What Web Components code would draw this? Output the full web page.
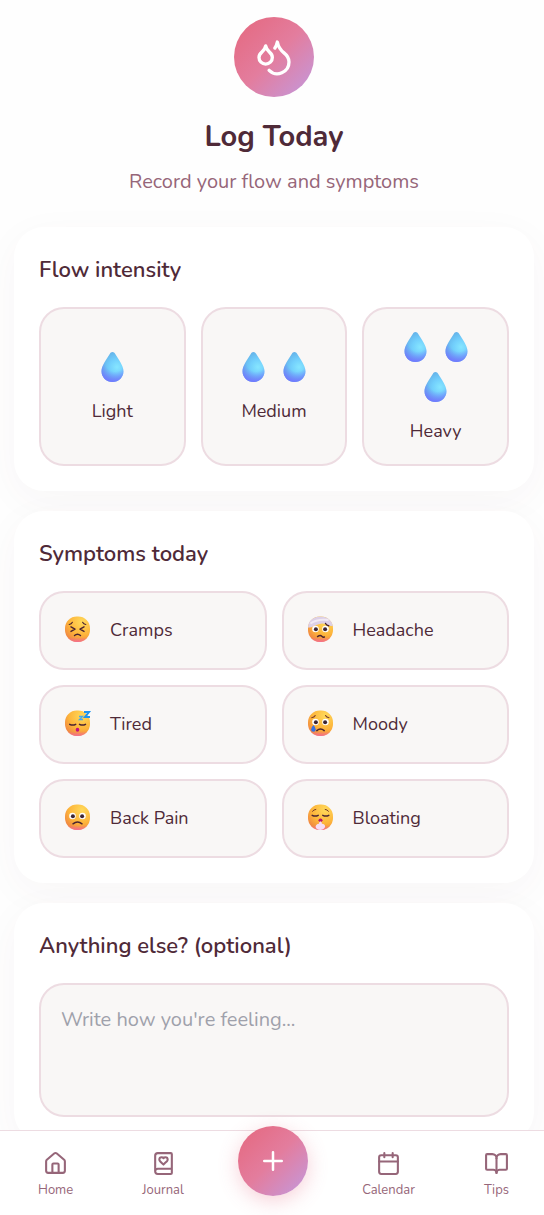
<!DOCTYPE html>
<html lang="en">
<head>
<meta charset="utf-8">
<meta name="viewport" content="width=device-width, initial-scale=1">
<title>Log Today</title>
<style>
    :root {
        --ink: #4f2a38;
        --muted: #966679;
        --line: #eddce2;
        --tile: #f9f7f6;
        --brand: linear-gradient(135deg, #e5677d 0%, #e37d9e 50%, #c29ae0 100%);
    }
    body {
        margin: 0; height: 100vh; display: flex; flex-direction: column;
        background: #fefefe; color: var(--ink);
        font-family: Nunito, Lato, "Noto Sans", sans-serif; font-size: 18px;
    }
    main {
        flex: 1; min-height: 0; overflow: hidden auto; scrollbar-width: none;
        display: flex; flex-direction: column; gap: 20px; padding: 17px 10px 20px 14px;
    }
    .flow { display: grid; grid-template-columns: repeat(3, 1fr); gap: 15px; }
    .symptoms { display: grid; grid-template-columns: repeat(2, 1fr); gap: 15px; }
</style>
</head>
<body>
<main>
    <log-header>
        <span slot="title">Log Today</span>
        <span slot="subtitle">Record your flow and symptoms</span>
    </log-header>
    <log-card>
        <span slot="title">Flow intensity</span>
        <div class="flow">
            <flow-option drops="1">Light</flow-option>
            <flow-option drops="2">Medium</flow-option>
            <flow-option drops="3">Heavy</flow-option>
        </div>
    </log-card>
    <log-card>
        <span slot="title">Symptoms today</span>
        <div class="symptoms">
            <symptom-option face="cramps">Cramps</symptom-option>
            <symptom-option face="headache">Headache</symptom-option>
            <symptom-option face="tired">Tired</symptom-option>
            <symptom-option face="moody">Moody</symptom-option>
            <symptom-option face="back">Back Pain</symptom-option>
            <symptom-option face="bloating">Bloating</symptom-option>
        </div>
    </log-card>
    <notes-card label="Anything else? (optional)" placeholder="Write how you're feeling..."></notes-card>
</main>
<bottom-nav>
    <nav-item icon="home" href="#home">Home</nav-item>
    <nav-item icon="journal" href="#journal">Journal</nav-item>
    <add-button></add-button>
    <nav-item icon="calendar" href="#calendar">Calendar</nav-item>
    <nav-item icon="tips" href="#tips">Tips</nav-item>
</bottom-nav>

<script>
const ICONS = {
    drops: '<path d="M7 16.3c2.2 0 4-1.83 4-4.05 0-1.16-.57-2.26-1.71-3.19S7.29 6.75 7 5.3c-.29 1.45-1.14 2.84-2.29 3.76S3 11.1 3 12.25c0 2.22 1.8 4.05 4 4.05z"/><path d="M12.56 6.6A10.97 10.97 0 0 0 14 3.02c.5 2.5 2 4.9 4 6.5s3 3.5 3 5.5a6.98 6.98 0 0 1-11.91 4.97"/>',
    home: '<path d="M15 21v-8a1 1 0 0 0-1-1h-4a1 1 0 0 0-1 1v8"/><path d="M3 10a2 2 0 0 1 .709-1.528l7-5.999a2 2 0 0 1 2.582 0l7 5.999A2 2 0 0 1 21 10v9a2 2 0 0 1-2 2H5a2 2 0 0 1-2-2z"/>',
    journal: '<path d="M16 8.2A2.22 2.22 0 0 0 13.8 6c-.8 0-1.4.3-1.8.9-.4-.6-1-.9-1.8-.9A2.22 2.22 0 0 0 8 8.2c0 .6.3 1.2.7 1.6A226.652 226.652 0 0 0 12 13a404 404 0 0 0 3.3-3.1 2.413 2.413 0 0 0 .7-1.7"/><path d="M4 19.5v-15A2.5 2.5 0 0 1 6.5 2H19a1 1 0 0 1 1 1v18a1 1 0 0 1-1 1H6.5a1 1 0 0 1 0-5H20"/>',
    calendar: '<path d="M8 2v4M16 2v4M3 10h18"/><rect width="18" height="18" x="3" y="4" rx="2"/>',
    tips: '<path d="M12 7v14"/><path d="M3 18a1 1 0 0 1-1-1V4a1 1 0 0 1 1-1h5a4 4 0 0 1 4 4 4 4 0 0 1 4-4h5a1 1 0 0 1 1 1v13a1 1 0 0 1-1 1h-6a3 3 0 0 0-3 3 3 3 0 0 0-3-3z"/>',
    plus: '<path d="M5 12h14M12 5v14"/>'
};

function icon(name, size) {
    return `<svg width="${size}" height="${size}" viewBox="0 0 24 24" fill="none" stroke="currentColor"
        stroke-width="2" stroke-linecap="round" stroke-linejoin="round" aria-hidden="true">${ICONS[name]}</svg>`;
}

const OPEN_EYES = `
    <circle cx="11.5" cy="15" r="3.3" fill="#fff"/><circle cx="21.5" cy="15" r="3.3" fill="#fff"/>
    <circle cx="11.9" cy="15.2" r="2" fill="#3d2634"/><circle cx="21.1" cy="15.2" r="2" fill="#3d2634"/>`;

const FACES = {
    cramps: `<g fill="none" stroke="#4b2431" stroke-linecap="round" stroke-linejoin="round" stroke-width="1.4">
        <path d="M10 13.8l4 2.3-4 2.3M23 13.8l-4 2.3 4 2.3"/>
        <path d="M8.2 11.5q2.2-.2 3.2-2.2M24.8 11.5q-2.2-.2-3.2-2.2" stroke-width="1.1"/>
        <path d="M13.5 22.6q3-2.8 6 0"/></g>`,
    headache: `<path d="M4 14.6C4 7.5 9.5 3.4 16.5 3.4c6.8 0 11.6 4.200 12.400 9.600-3.600.6-6.300-2.600-10.400-2.600-5.300 0-8.600 4-14.500 4.200z" fill="#ddd0e6"/>
        <path d="M6.500 10.500Q13 5.500 24.500 7" fill="none" stroke="#f1e9f4" stroke-width="2"/>
        <g transform="translate(0 1)">${OPEN_EYES}</g>
        <path d="M21.500 10.500q1 2 3.200 2.300M13.500 23.600q2.800-2 4.300-.4t2.600.7" fill="none" stroke="#4b2431" stroke-width="1.4" stroke-linecap="round"/>`,
    tired: `<path d="M8.700 17.300q3 1.600 6 0M18.500 17.300q3 1.600 6 0" fill="none" stroke="#4b2431" stroke-width="1.5" stroke-linecap="round"/>
        <ellipse cx="16.500" cy="22.800" rx="1.800" ry="2" fill="#c3117d"/>
        <path d="M23 5h5l-4 5h5" fill="none" stroke="#1e94ef" stroke-width="2"/>
        <path d="M18 9.500h3.500l-3 3H22" fill="none" stroke="#4aa9e8" stroke-width="1.3"/>`,
    moody: `${OPEN_EYES}
        <path d="M7.700 10.800q2.500-.3 3.500-2.300M25 10.800q-2.500-.3-3.500-2.300" fill="none" stroke="#7a3c2b" stroke-width="1.1" stroke-linecap="round"/>
        <path d="M12.800 23.600q3.700-3.300 7.400 0" fill="none" stroke="#4b2431" stroke-width="1.5" stroke-linecap="round"/>
        <path d="M9.400 18q2.300 2.500 2.300 4.500a2.300 2.300 0 0 1-4.600 0q0-2 2.300-4.500z" fill="#346fe3"/>`,
    back: `${OPEN_EYES}
        <path d="M12 22.800q4.500-3.600 9 0" fill="none" stroke="#4b2431" stroke-width="1.5" stroke-linecap="round"/>`,
    bloating: `<path d="M8.200 14.300q3 1.600 6 0M18.800 14.300q3 1.600 6 0" fill="none" stroke="#4b2431" stroke-width="1.5" stroke-linecap="round"/>
        <path d="M8.500 10.300q1.300-1.800 3.300-1.900M24.500 10.300q-1.300-1.800-3.300-1.900" fill="none" stroke="#7a3c2b" stroke-width="1" stroke-linecap="round"/>
        <ellipse cx="16.500" cy="19.300" rx="2" ry="1.700" fill="#b8146e"/>
        <path d="M16.500 20.300q1.700 1 1.400 2.500 3 0 3.200 2.700-.3 2.800-4.600 3.400-4.600-.3-4.900-3.200.3-2.600 3.400-2.900-.1-1.600 1.500-2.500z" fill="#f6ddf6"/>`
};

class LogHeader extends HTMLElement {
    constructor() {
        super();
        this.attachShadow({ mode: 'open' });
    }

    connectedCallback() {
        this.shadowRoot.innerHTML = `
<style>
    :host { display: block; text-align: center; padding-bottom: 10px; }
    .badge { display: flex; align-items: center; justify-content: center; width: 80px; height: 80px;
        margin: 0 auto 20px; border-radius: 50%; background: var(--brand); color: #fff; }
    h1 { margin: 0 0 10px; font-size: 29px; line-height: 40px; font-weight: 700; }
    p { margin: 0; font-size: 20px; line-height: 30px; color: var(--muted); }
</style>
<div class="badge">${icon('drops', 40)}</div>
<h1><slot name="title"></slot></h1>
<p><slot name="subtitle"></slot></p>`;
    }
}
window.customElements.define('log-header', LogHeader);

const CARD_STYLE = `
    :host { display: block; padding: 25px; border-radius: 30px; background: #fff;
        box-shadow: 0 10px 40px rgba(110, 40, 70, .04); }
    .title { display: block; margin: 0 0 18px; font-size: 22px; line-height: 37px; font-weight: 600; }`;

class LogCard extends HTMLElement {
    constructor() {
        super();
        this.attachShadow({ mode: 'open' });
    }

    connectedCallback() {
        this.shadowRoot.innerHTML = `
<style>${CARD_STYLE}</style>
<h2 class="title"><slot name="title"></slot></h2>
<slot></slot>`;
    }
}
window.customElements.define('log-card', LogCard);

class NotesCard extends HTMLElement {
    constructor() {
        super();
        this.attachShadow({ mode: 'open' });
    }

    connectedCallback() {
        this.shadowRoot.innerHTML = `
<style>${CARD_STYLE}
    textarea { display: block; box-sizing: border-box; width: 100%; padding: 20px; resize: none;
        border: 2px solid var(--line); border-radius: 25px; background: var(--tile); color: inherit;
        font-family: inherit; font-size: 20px; line-height: 30px; outline: none; }
    textarea:focus { border-color: #e37d9e; }
    textarea::placeholder { color: #9fa1ab; opacity: 1; }
</style>
<label class="title" for="notes"></label>
<textarea id="notes" rows="3"></textarea>`;
        this.shadowRoot.querySelector('label').innerText = this.getAttribute('label');
        this.shadowRoot.querySelector('textarea').setAttribute('placeholder', this.getAttribute('placeholder'));
    }
}
window.customElements.define('notes-card', NotesCard);

// shared by the flow and symptom tiles
const TILE_STYLE = `
    :host { display: block; }
    button { display: flex; box-sizing: border-box; width: 100%; height: 100%; padding: 20px; align-items: center;
        border: 2px solid var(--line); border-radius: 25px; background: var(--tile); color: inherit;
        font: inherit; cursor: pointer; }
    button[aria-pressed="true"] { border-color: #e37d9e; background: #fdeef3; }
    svg { display: block; flex: none; }`;

class ToggleTile extends HTMLElement {
    constructor() {
        super();
        this.attachShadow({ mode: 'open' });
    }

    connectedCallback() {
        this.render();
        this.shadowRoot.querySelector('button').addEventListener('click', this.onClick.bind(this));
    }

    onClick(e) {
        var button = e.currentTarget;
        button.setAttribute('aria-pressed', button.getAttribute('aria-pressed') !== 'true');
    }
}

class FlowOption extends ToggleTile {
    render() {
        var shape = 'M20.5 3c1.2 0 2 .8 2.600 1.800 3.700 6.200 8.400 12.200 8.400 17.400 0 6.100-4.900 10.800-11 10.800s-11-4.700-11-10.800c0-5.200 4.700-11.200 8.400-17.400.6-1 1.400-1.800 2.600-1.800z';
        var drop = `<svg width="41" height="40" viewBox="0 0 41 40" aria-hidden="true">
    <defs>
        <radialGradient id="body" gradientUnits="userSpaceOnUse" cx="25" cy="18" r="17">
            <stop offset="0" stop-color="#86e6ff"/><stop offset=".45" stop-color="#72cffc"/><stop offset="1" stop-color="#62aee6"/>
        </radialGradient>
        <radialGradient id="base" gradientUnits="userSpaceOnUse" cx="23" cy="13" r="21">
            <stop offset=".45" stop-color="#7279ff" stop-opacity="0"/><stop offset=".95" stop-color="#7279ff"/>
        </radialGradient>
    </defs>
    <path d="${shape}" fill="url(#body)"/>
    <path d="${shape}" fill="url(#base)"/>
</svg>`;
        this.shadowRoot.innerHTML = `
<style>${TILE_STYLE}
    button { flex-direction: column; justify-content: center; gap: 10px; line-height: 25px; }
    .drops { display: flex; flex-wrap: wrap; justify-content: center; }
</style>
<button type="button" aria-pressed="false">
    <span class="drops">${drop.repeat(Number(this.getAttribute('drops')))}</span>
    <span><slot></slot></span>
</button>`;
    }
}
window.customElements.define('flow-option', FlowOption);

class SymptomOption extends ToggleTile {
    render() {
        this.shadowRoot.innerHTML = `
<style>${TILE_STYLE}
    button { gap: 15px; line-height: 35px; text-align: left; }
</style>
<button type="button" aria-pressed="false">
    <svg width="34" height="35" viewBox="0 0 34 35" aria-hidden="true">
        <defs>
            <radialGradient id="skin" gradientUnits="userSpaceOnUse" cx="21" cy="9" r="22">
                <stop offset="0" stop-color="#ffd95a"/><stop offset=".6" stop-color="#fdb43a"/><stop offset="1" stop-color="#ee8044"/>
            </radialGradient>
            <linearGradient id="chin" x1="0" y1="0" x2="0" y2="1">
                <stop offset=".82" stop-color="#f66a9c" stop-opacity="0"/><stop offset="1" stop-color="#f66a9c" stop-opacity=".85"/>
            </linearGradient>
        </defs>
        <rect x="4" y="3.5" width="25" height="25.4" rx="11.8" fill="url(#skin)"/>
        <rect x="4" y="3.5" width="25" height="25.4" rx="11.8" fill="url(#chin)"/>
        ${FACES[this.getAttribute('face')]}
    </svg>
    <span><slot></slot></span>
</button>`;
    }
}
window.customElements.define('symptom-option', SymptomOption);

class BottomNav extends HTMLElement {
    constructor() {
        super();
        this.attachShadow({ mode: 'open' });
    }

    connectedCallback() {
        this.shadowRoot.innerHTML = `
<style>
    :host { display: block; position: relative; z-index: 1; border-top: 1px solid var(--line); background: #fff; }
    nav { display: flex; justify-content: space-between; align-items: flex-start; padding: 10px 20px 6px 23px; }
</style>
<nav aria-label="Main"><slot></slot></nav>`;
    }
}
window.customElements.define('bottom-nav', BottomNav);

class NavItem extends HTMLElement {
    constructor() {
        super();
        this.attachShadow({ mode: 'open' });
    }

    connectedCallback() {
        this.shadowRoot.innerHTML = `
<style>
    :host { display: block; }
    a { display: flex; flex-direction: column; align-items: center; gap: 5px; padding: 10px 15px;
        color: var(--muted); text-decoration: none; font-size: 13px; line-height: 18px; }
    svg { display: block; }
</style>
<a href="${this.getAttribute('href')}">${icon(this.getAttribute('icon'), 25)}<span><slot></slot></span></a>`;
    }
}
window.customElements.define('nav-item', NavItem);

class AddButton extends HTMLElement {
    constructor() {
        super();
        this.attachShadow({ mode: 'open' });
    }

    connectedCallback() {
        this.shadowRoot.innerHTML = `
<style>
    :host { display: block; margin-top: -15px; }
    button { display: flex; align-items: center; justify-content: center; width: 70px; height: 70px; padding: 0;
        border: 0; border-radius: 50%; background: var(--brand); color: #fff; cursor: pointer;
        box-shadow: 0 5px 20px rgba(229, 103, 125, .3); }
</style>
<button type="button" aria-label="Add entry">${icon('plus', 30)}</button>`;
    }
}
window.customElements.define('add-button', AddButton);
</script>
</body>
</html>
